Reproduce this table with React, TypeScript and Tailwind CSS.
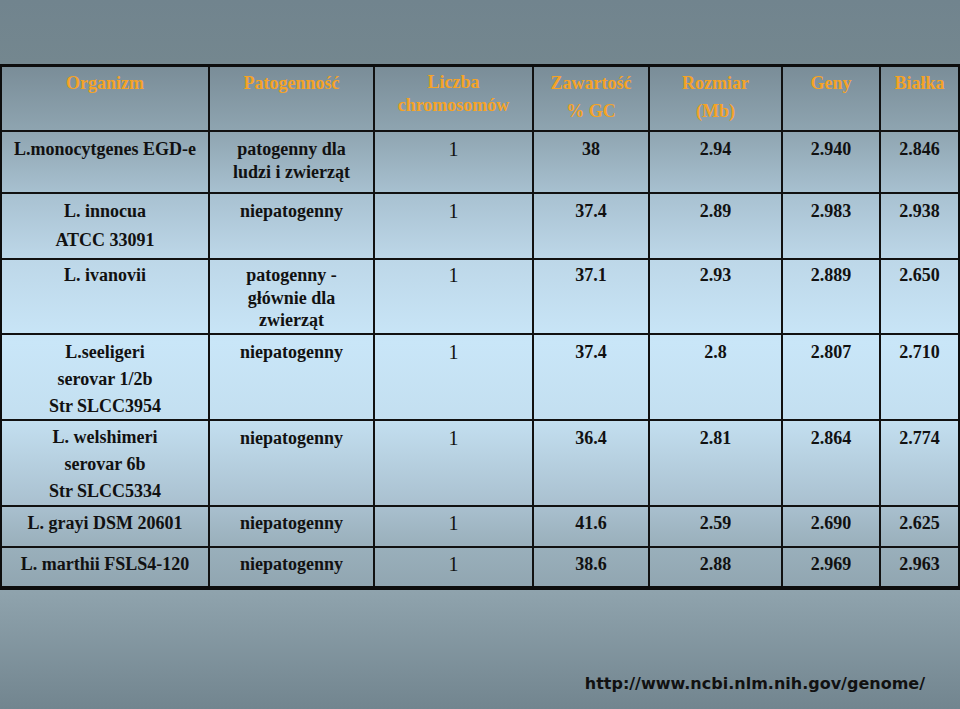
const cols = "grid grid-cols-[208px_165px_159px_116px_133px_98px_1fr]";

type Row = {
  h: string;
  pad: string;
  orgCls: string;
  org: string[];
  pat: string[];
  gc: string;
  size: string;
  genes: string;
  prot: string;
  last?: boolean;
};

const rows: Row[] = [
  {
    h: "h-[62px]",
    pad: "pt-[6px]",
    orgCls: "pt-[6px] leading-[23px]",
    org: ["L.monocytgenes EGD-e"],
    pat: ["patogenny dla", "ludzi i zwierząt"],
    gc: "38",
    size: "2.94",
    genes: "2.940",
    prot: "2.846",
  },
  {
    h: "h-[66px]",
    pad: "pt-[6px]",
    orgCls: "pt-[3px] leading-[29px]",
    org: ["L. innocua", "ATCC 33091"],
    pat: ["niepatogenny"],
    gc: "37.4",
    size: "2.89",
    genes: "2.983",
    prot: "2.938",
  },
  {
    h: "h-[75px]",
    pad: "pt-[4px]",
    orgCls: "pt-[4px] leading-[23px]",
    org: ["L. ivanovii"],
    pat: ["patogenny -", "głównie dla", "zwierząt"],
    gc: "37.1",
    size: "2.93",
    genes: "2.889",
    prot: "2.650",
  },
  {
    h: "h-[86px]",
    pad: "pt-[6px]",
    orgCls: "pt-[4px] leading-[27px]",
    org: ["L.seeligeri", "serovar 1/2b", "Str SLCC3954"],
    pat: ["niepatogenny"],
    gc: "37.4",
    size: "2.8",
    genes: "2.807",
    prot: "2.710",
  },
  {
    h: "h-[86px]",
    pad: "pt-[6px]",
    orgCls: "pt-[3px] leading-[27px]",
    org: ["L. welshimeri", "serovar 6b", "Str SLCC5334"],
    pat: ["niepatogenny"],
    gc: "36.4",
    size: "2.81",
    genes: "2.864",
    prot: "2.774",
  },
  {
    h: "h-[41px]",
    pad: "pt-[5px]",
    orgCls: "pt-[5px] leading-[23px]",
    org: ["L. grayi DSM 20601"],
    pat: ["niepatogenny"],
    gc: "41.6",
    size: "2.59",
    genes: "2.690",
    prot: "2.625",
  },
  {
    h: "h-[38px]",
    pad: "pt-[5px]",
    orgCls: "pt-[5px] leading-[23px]",
    org: ["L. marthii FSLS4-120"],
    pat: ["niepatogenny"],
    gc: "38.6",
    size: "2.88",
    genes: "2.969",
    prot: "2.963",
    last: true,
  },
];

function Lines({ items }: { items: string[] }) {
  return (
    <>
      {items.map((t, i) => (
        <div key={i}>{t}</div>
      ))}
    </>
  );
}

const cell = "border-r-2 border-[#111] text-center";

export default function App() {
  return (
    <div className="h-[709px] w-[960px] overflow-hidden bg-[linear-gradient(to_bottom,#71848e_0px,#74878f_64px,#8fa3ad_592px,#72858f_709px)] font-['Liberation_Serif','Times_New_Roman',serif] text-[18px] font-bold text-[#111]">
      <div className="mt-[64px] border-x-2 border-t-[3px] border-b-4 border-[#0d0d0d] bg-[linear-gradient(to_bottom,#7a8d98_0%,#8ea4b0_12%,#a9c2d2_25%,#bdd7e8_37%,#c9e6f8_53%,#c3dff0_68%,#aac1d0_84%,#9ab0bc_92%,#91a6b1_100%)]">
        <div className={`${cols} h-[65px] border-b-2 border-[#111] text-[#f5a326]`}>
          <div className={`${cell} pt-[2px] leading-[28px]`}>Organizm</div>
          <div className={`${cell} pt-[2px] leading-[28px]`}>Patogenność</div>
          <div className={`${cell} pt-[4px] leading-[23px]`}>
            Liczba
            <br />
            chromosomów
          </div>
          <div className={`${cell} pt-[2px] leading-[28px]`}>
            Zawartość
            <br />% GC
          </div>
          <div className={`${cell} pt-[2px] leading-[28px]`}>
            Rozmiar
            <br />
            (Mb)
          </div>
          <div className={`${cell} pt-[2px] leading-[28px]`}>Geny</div>
          <div className="pt-[2px] text-center leading-[28px]">Białka</div>
        </div>

        {rows.map((r, i) => (
          <div
            key={i}
            className={`${cols} ${r.h} ${r.last ? "" : "border-b-2 border-[#111]"}`}
          >
            <div className={`${cell} ${r.orgCls}`}>
              <Lines items={r.org} />
            </div>
            <div className={`${cell} ${r.pad} leading-[22.5px]`}>
              <Lines items={r.pat} />
            </div>
            <div className={`${cell} ${r.pad} text-[20px] font-normal leading-[23px]`}>1</div>
            <div className={`${cell} ${r.pad} leading-[23px]`}>{r.gc}</div>
            <div className={`${cell} ${r.pad} leading-[23px]`}>{r.size}</div>
            <div className={`${cell} ${r.pad} leading-[23px]`}>{r.genes}</div>
            <div className={`${r.pad} text-center leading-[23px]`}>{r.prot}</div>
          </div>
        ))}
      </div>

      <div className="mt-[84px] flex justify-end pr-[35px]">
        <span className="font-['Comic_Sans_MS','DejaVu_Sans',sans-serif] text-[16px] font-bold leading-[20px] text-[#111]">
          http://www.ncbi.nlm.nih.gov/genome/
        </span>
      </div>
    </div>
  );
}
